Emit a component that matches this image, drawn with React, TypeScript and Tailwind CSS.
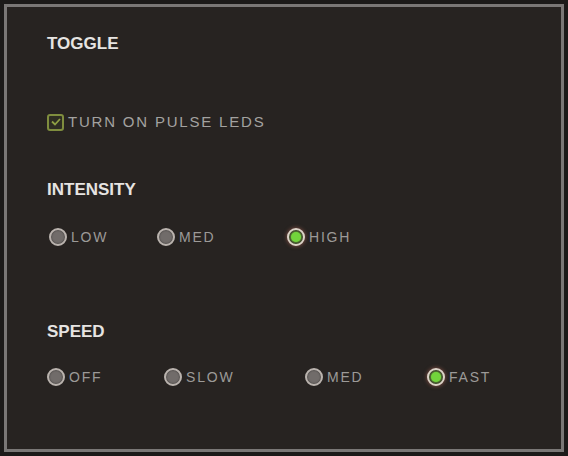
import React from "react"

type Opt = { label: string; w: string; on?: boolean }

const INTENSITY: Opt[] = [
  { label: "LOW", w: "w-[108px]" },
  { label: "MED", w: "w-[130px]" },
  { label: "HIGH", w: "w-[80px]", on: true },
]

const SPEED: Opt[] = [
  { label: "OFF", w: "w-[117px]" },
  { label: "SLOW", w: "w-[141px]" },
  { label: "MED", w: "w-[122px]" },
  { label: "FAST", w: "w-[80px]", on: true },
]

const font = { fontFamily: '"Liberation Sans", Arial, sans-serif' }

function Radio({ on }: { on?: boolean }) {
  return on ? (
    <span className="flex h-[18px] w-[18px] shrink-0 items-center justify-center rounded-full border-2 border-[#ddd3ca] bg-[#3a3a2a] shadow-[0_0_4px_rgba(210,120,100,0.6)]">
      <span className="h-[10px] w-[10px] rounded-full bg-[#72d43c] shadow-[0_0_3px_#7ee040]" />
    </span>
  ) : (
    <span className="flex h-[18px] w-[18px] shrink-0 items-center justify-center rounded-full border-[2.5px] border-[#bab3ae] bg-[#716c6a] shadow-[inset_0_0_2px_rgba(0,0,0,0.6)]" />
  )
}

function Row({ opts }: { opts: Opt[] }) {
  return (
    <div className="flex items-center">
      {opts.map(o => (
        <div key={o.label} className={`flex items-center gap-[4px] ${o.w}`}>
          <Radio on={o.on} />
          <span className="text-[14px] tracking-[1.8px] text-[#9c9a98]">{o.label}</span>
        </div>
      ))}
    </div>
  )
}

function Heading({ children }: { children: React.ReactNode }) {
  return (
    <h2 className="text-[17px] leading-[20px] font-bold tracking-[0px] text-[#e6e4e2]">{children}</h2>
  )
}

export default function App() {
  return (
    <div className="h-[456px] w-[568px] bg-[#1c1a19] p-1" style={font}>
      <div className="h-full border-[3px] border-[#7a7776] bg-[#272321] pl-[40px] pt-[27px]">
        <Heading>TOGGLE</Heading>

        <div className="mt-[57px] flex items-center gap-[4px]">
          <span className="flex h-[17px] w-[17px] items-center justify-center rounded-[3px] border-2 border-[#7f8d3e] bg-[#2e2d22]">
            <svg width="10" height="8" viewBox="0 0 10 8" fill="none">
              <path d="M1 3.5 L4 6.5 L9 1" stroke="#8fa044" strokeWidth="1.8" />
            </svg>
          </span>
          <span className="text-[15px] tracking-[1.8px] text-[#a3a2a0]">TURN ON PULSE LEDS</span>
        </div>

        <div className="mt-[46px]">
          <Heading>INTENSITY</Heading>
        </div>
        <div className="mt-[27px] ml-[2px]">
          <Row opts={INTENSITY} />
        </div>

        <div className="mt-[74px]">
          <Heading>SPEED</Heading>
        </div>
        <div className="mt-[25px]">
          <Row opts={SPEED} />
        </div>
      </div>
    </div>
  )
}
